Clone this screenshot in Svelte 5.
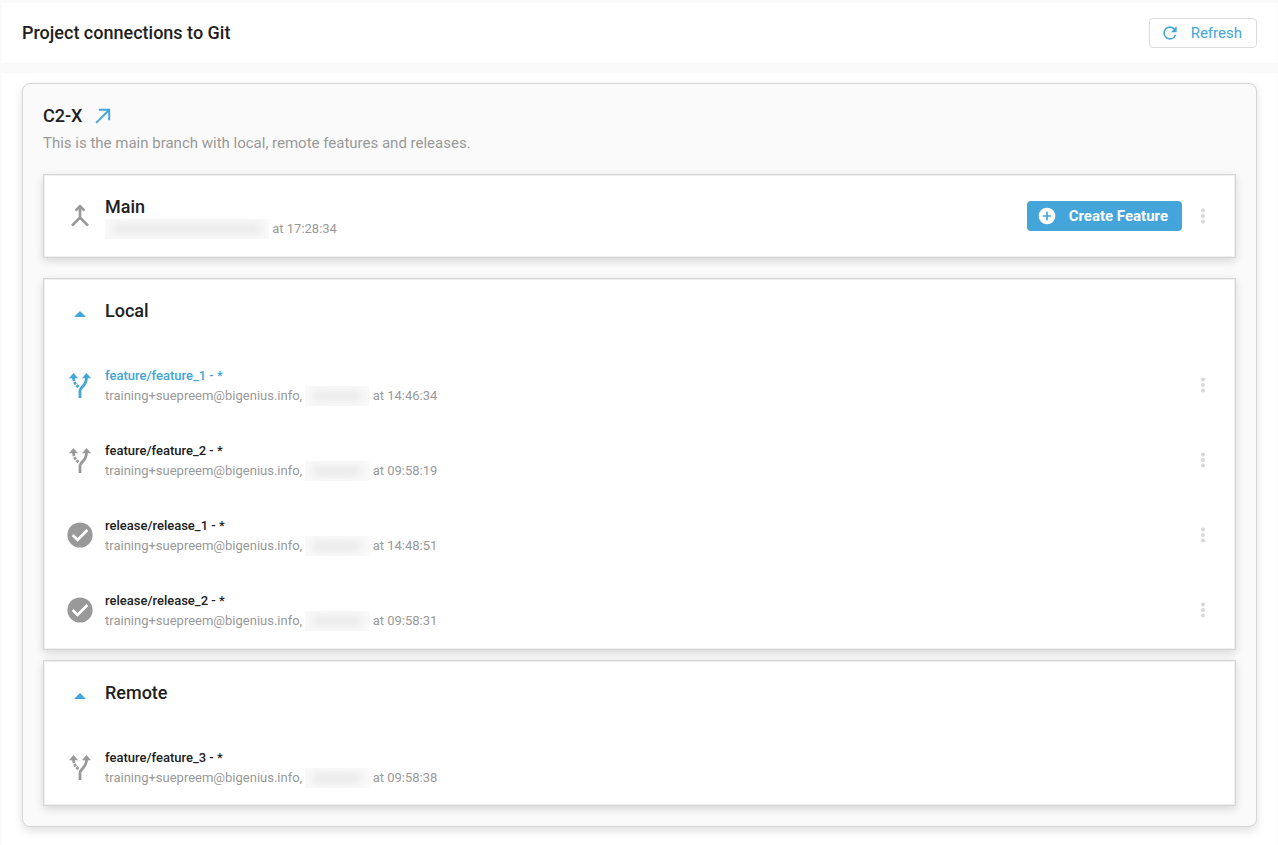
<script>
  // Data
  const mainBranch = { name: 'Main', time: '17:28:34' };

  const groups = [
    {
      name: 'Local',
      branches: [
        { name: 'feature/feature_1', type: 'feature', time: '14:46:34', active: true },
        { name: 'feature/feature_2', type: 'feature', time: '09:58:19' },
        { name: 'release/release_1', type: 'release', time: '14:48:51' },
        { name: 'release/release_2', type: 'release', time: '09:58:31' }
      ]
    },
    {
      name: 'Remote',
      branches: [
        { name: 'feature/feature_3', type: 'feature', time: '09:58:38', noMenu: true }
      ]
    }
  ];

  const user = 'training+suepreem@bigenius.info';

  // State
  let open = $state({ Local: true, Remote: true });

  function toggle(name) {
    open[name] = !open[name];
  }
</script>

{#snippet menuButton(label)}
  <button type="button" class="menu" aria-label="Options for {label}">
    <svg width="24" height="24" viewBox="0 0 24 24">
      <circle cx="12" cy="6.5" r="2" />
      <circle cx="12" cy="12" r="2" />
      <circle cx="12" cy="17.5" r="2" />
    </svg>
  </button>
{/snippet}

<div class="page">
  <header>
    <h1>Project connections to Git</h1>
    <button type="button" class="refresh">
      <svg width="20" height="20" viewBox="0 0 24 24">
        <path d="M17.65 6.35A7.96 7.96 0 0 0 12 4a8 8 0 1 0 7.73 10h-2.08A6 6 0 1 1 12 6c1.66 0 3.14.69 4.22 1.78L13 11h7V4z" />
      </svg>
      Refresh
    </button>
  </header>

  <main>
    <section class="project">
      <div class="title">
        <h2>C2-X</h2>
        <a href="#project" aria-label="Open project">
          <svg width="16" height="16" viewBox="0 0 16 16">
            <path d="M1.2 14.8L14 2M3.8 1.8h10.4v10.4" />
          </svg>
        </a>
      </div>
      <p class="description">This is the main branch with local, remote features and releases.</p>

      <div class="card main-branch">
        <svg class="icon" width="28" height="28" viewBox="0 0 28 28">
          <path class="line" d="M14 4.5V16M9.6 8.6L14 4.2 18.4 8.6M14 15.5L6 23.7M14 15.5l8 8.2" />
        </svg>
        <div class="info">
          <h3>{mainBranch.name}</h3>
          <p class="meta"><span class="redacted wide"></span> at {mainBranch.time}</p>
        </div>
        <button type="button" class="create">
          <svg width="20" height="20" viewBox="0 0 24 24">
            <path d="M12 2a10 10 0 1 0 0 20 10 10 0 0 0 0-20zm5 11h-4v4h-2v-4H7v-2h4V7h2v4h4z" />
          </svg>
          Create Feature
        </button>
        {@render menuButton(mainBranch.name)}
      </div>

      {#each groups as group}
        <div class="card group">
          <div class="group-header">
            <button type="button" class="toggle" aria-label="Toggle {group.name}" aria-expanded={open[group.name]} onclick={() => toggle(group.name)}>
              <svg class:closed={!open[group.name]} width="28" height="28" viewBox="0 0 28 28">
                <path d="M8 17l6-6 6 6z" />
              </svg>
            </button>
            <h3>{group.name}</h3>
          </div>

          {#if open[group.name]}
            <ul>
              {#each group.branches as branch}
                <li class:active={branch.active}>
                  {#if branch.type === 'feature'}
                    <svg class="icon" width="28" height="28" viewBox="0 0 28 28">
                      <path d="M3 7.3L7.5 2 12 7.300zM16 7.3L20.500 2 25 7.300z" />
                      <path class="thick" d="M14 27V19.500C14 16 20.500 15.500 20.500 6.500" />
                      <path class="thick dots" d="M7.500 6C7.700 11.500 9.500 13.500 12.500 16" />
                    </svg>
                  {:else}
                    <svg class="icon" width="28" height="28" viewBox="0 0 28 28">
                      <circle cx="14" cy="14" r="12.6" />
                      <path class="check" d="M6.600 14l5 5L21.400 9" />
                    </svg>
                  {/if}
                  <div class="info">
                    <h4>{branch.name} - *</h4>
                    <p class="meta">{user}, <span class="redacted"></span> at {branch.time}</p>
                  </div>
                  {#if !branch.noMenu}
                    {@render menuButton(branch.name)}
                  {/if}
                </li>
              {/each}
            </ul>
          {/if}
        </div>
      {/each}
    </section>
  </main>
</div>

<style>
  :global(body) {
    background: #fafafa;
    font-family: Roboto, Arial, sans-serif;
    color: #212121;
  }

  .page {
    padding: 3px 1px 0 2px;
  }

  h1, h2, h3, h4, p, ul {
    margin: 0;
    padding: 0;
  }

  h1, h2, h3 {
    font-size: 18px;
    font-weight: 500;
    line-height: 24px;
  }

  h4 {
    font-size: 13px;
    font-weight: 500;
    line-height: 20px;
  }

  svg {
    display: block;
    flex: none;
    fill: currentColor;
  }

  button {
    display: flex;
    align-items: center;
    box-sizing: border-box;
    border: none;
    background: none;
    font-family: inherit;
    cursor: pointer;
  }

  header {
    display: flex;
    align-items: center;
    justify-content: space-between;
    height: 60px;
    padding: 0 20px;
    background: #fff;
  }

  .refresh {
    height: 30px;
    gap: 11px;
    padding: 0 14px 0 10px;
    border: 1px solid #dcdcdc;
    border-radius: 4px;
    background: #fff;
    color: #43a5da;
    font-size: 15px;
  }

  main {
    margin-top: 10px;
    padding: 10px 20px 18px;
    background: #fff;
  }

  .project {
    padding: 20px;
    border: 1px solid #d5d6d7;
    border-radius: 8px;
    background: #fafafa;
    box-shadow: 0 4px 10px rgba(0, 0, 0, 0.12);
  }

  .title {
    display: flex;
    align-items: center;
    gap: 13px;
  }

  .title a {
    color: #43a5da;
  }

  .title path {
    fill: none;
    stroke: currentColor;
    stroke-width: 1.9;
  }

  .description {
    margin: 4px 0 20px;
    color: #999;
    font-size: 15px;
    line-height: 22px;
  }

  .card {
    border: 1px solid #d5d6d7;
    background: #fff;
    box-shadow: inset 0 0 0 1px #efefef, 0 3px 8px rgba(0, 0, 0, 0.14);
  }

  .main-branch {
    display: flex;
    align-items: center;
    height: 82px;
    margin-bottom: 20px;
    padding: 0 20px 0 22px;
  }

  .group {
    padding-bottom: 2px;
  }

  .group + .group {
    margin-top: 10px;
    padding-bottom: 1px;
  }

  .group-header {
    display: flex;
    align-items: center;
    height: 64px;
    padding-bottom: 4px;
    padding-left: 22px;
  }

  .toggle {
    margin-right: 11px;
    padding: 0;
    color: #43a5da;
  }

  .toggle svg {
    margin-top: 6px;
  }

  .closed {
    transform: rotate(180deg);
  }

  li {
    display: flex;
    align-items: center;
    height: 75px;
    padding: 0 20px 0 22px;
  }

  .icon {
    margin-right: 11px;
    color: #999;
  }

  .active .icon,
  .active h4 {
    color: #43a5da;
  }

  .line {
    fill: none;
    stroke: currentColor;
    stroke-width: 2.6;
  }

  .thick {
    fill: none;
    stroke: currentColor;
    stroke-width: 2.8;
  }

  .dots {
    stroke-dasharray: 4 1.2 2.6 1.2;
  }

  .check {
    fill: none;
    stroke: #fff;
    stroke-width: 2.6;
  }

  .info {
    flex: 1;
    padding-top: 2px;
  }

  .meta {
    color: #999;
    font-size: 13px;
    line-height: 20px;
    white-space: nowrap;
  }

  .redacted {
    display: inline-block;
    box-sizing: border-box;
    width: 64px;
    height: 20px;
    padding: 6px 8px;
    overflow: hidden;
    background: #f9f9f9;
    vertical-align: top;
  }

  .redacted.wide {
    width: 164px;
  }

  .redacted::before {
    content: '';
    display: block;
    height: 8px;
    background: #e6e6e6;
    filter: blur(4px);
  }

  .create {
    height: 30px;
    gap: 12px;
    padding: 0 14px 0 10px;
    border-radius: 4px;
    background: #43a5da;
    color: #fff;
    font-size: 15px;
    font-weight: 700;
  }

  .menu {
    width: 24px;
    height: 24px;
    padding: 0;
    color: #d8d8d8;
  }

  .create + .menu {
    margin-left: 9px;
  }
</style>
